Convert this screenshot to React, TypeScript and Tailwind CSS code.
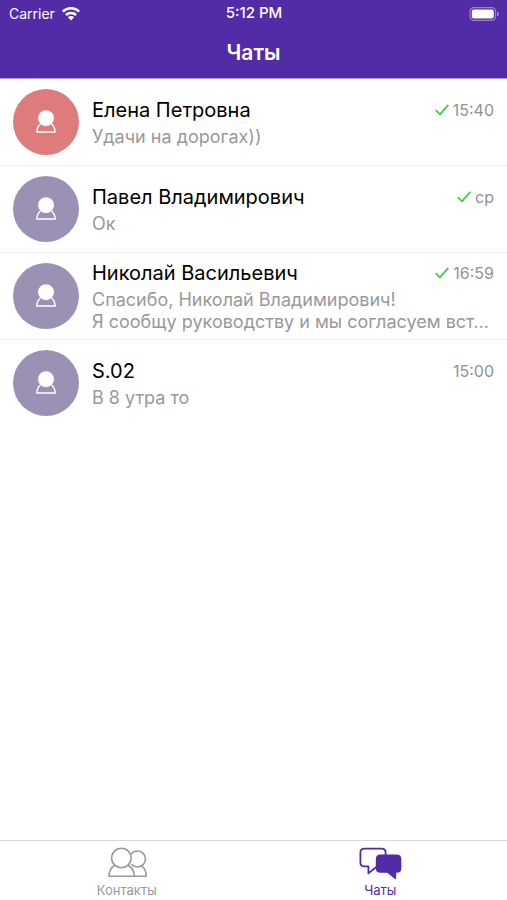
import React, { useState } from 'react';

type Chat = {
  id: number;
  name: string;
  message: string;
  time: string;
  read: boolean;
  color: string;
};

const chats: Chat[] = [
  {
    id: 1,
    name: 'Елена Петровна',
    message: 'Удачи на дорогах))',
    time: '15:40',
    read: true,
    color: 'bg-[#dd7b7d]',
  },
  {
    id: 2,
    name: 'Павел Владимирович',
    message: 'Ок',
    time: 'ср',
    read: true,
    color: 'bg-[#9b91b5]',
  },
  {
    id: 3,
    name: 'Николай Васильевич',
    message: 'Спасибо, Николай Владимирович!\nЯ сообщу руководству и мы согласуем вст...',
    time: '16:59',
    read: true,
    color: 'bg-[#9b91b5]',
  },
  {
    id: 4,
    name: 'S.02',
    message: 'В 8 утра то',
    time: '15:00',
    read: false,
    color: 'bg-[#9b91b5]',
  },
];

const WifiIcon = () => (
  <svg viewBox="0 0 18 14" className="w-[18px] h-[14px]" fill="none" stroke="white" strokeWidth="2.5">
    <path d="M0.9 4.6A11.6 11.6 0 0 1 17.1 4.6" />
    <path d="M3.9 8A7.3 7.3 0 0 1 14.1 8" />
    <path d="M9 13.4L5.9 10.3A4.4 4.4 0 0 1 12.1 10.3Z" fill="white" stroke="none" />
  </svg>
);

const BatteryIcon = () => (
  <svg viewBox="0 0 30 14" className="w-[30px] h-[14px]">
    <rect x="1" y="0.6" width="25.6" height="12.8" rx="4" fill="none" stroke="#9c83d3" strokeWidth="1.2" />
    <rect x="2.8" y="2.5" width="22" height="9" rx="2.2" fill="white" />
    <path d="M28 4.6Q30 5.4 30 7T28 9.4Z" fill="#9c83d3" />
  </svg>
);

const PersonIcon = () => (
  <svg viewBox="0 0 20 24" className="w-5 h-6">
    <path
      d="M4.4 14C2.2 15.8 1 18.4 0.8 22H19.2C19 18.4 17.8 15.8 15.6 14"
      fill="none"
      stroke="white"
      strokeWidth="1.5"
      strokeLinejoin="round"
    />
    <circle cx="10" cy="8.2" r="8" fill="white" />
  </svg>
);

const CheckIcon = () => (
  <svg viewBox="0 0 14 12" className="w-[14px] h-3" fill="none" stroke="#43cf43" strokeWidth="1.8">
    <path d="M1.2 6.6L5 10.4L12.8 1.4" strokeLinecap="round" strokeLinejoin="round" />
  </svg>
);

const ContactsIcon = () => (
  <svg viewBox="0 0 40 32" className="w-10 h-8" fill="none" stroke="currentColor" strokeWidth="1.6" strokeLinejoin="round">
    <circle cx="14.4" cy="11" r="9.8" />
    <path d="M7.8 18.2C4.2 20.4 2 24.2 1.8 29.2H27.4C27.2 24.2 25 20.4 21 18.2" />
    <path d="M24 7.2A8 8 0 1 1 24.4 17.2" />
    <path d="M35 19.4C37.8 21.4 39.2 24.8 39.2 29.2H27.4" />
  </svg>
);

const ChatsIcon = () => (
  <svg viewBox="0 0 44 34" className="w-11 h-[34px]" stroke="currentColor" strokeLinejoin="round">
    <path
      d="M18.6 19.8L10.4 26.4V19.4H6.4Q2.4 19.4 2.4 15.4V5.4Q2.4 1.6 6.4 1.6H23.6Q27.6 1.6 27.6 5.4V8"
      fill="none"
      strokeWidth="1.8"
    />
    <path
      d="M22.4 8.2H38.6Q42.6 8.2 42.6 12V21.4Q42.6 25 38.6 25H37.4V31.4L29.4 25H22.4Q18.6 25 18.6 21.4V12Q18.6 8.2 22.4 8.2Z"
      fill="currentColor"
      strokeWidth="1.5"
    />
  </svg>
);

const ChatRow = ({ chat }: { chat: Chat }) => (
  <li className="border-b border-[#f3f3f3] last:border-transparent">
    <button className="flex w-full h-[86px] items-center gap-[13px] px-[13px] text-left">
      <span className={`flex size-[66px] shrink-0 items-center justify-center rounded-full ${chat.color}`}>
        <PersonIcon />
      </span>
      <span className="min-w-0 flex-1">
        <span className="flex items-center justify-between">
          <span className="truncate text-[20px] leading-[26px] text-black">{chat.name}</span>
          <span className="flex shrink-0 items-center gap-1 text-[16px] leading-[26px] text-[#939393]">
            {chat.read && <CheckIcon />}
            {chat.time}
          </span>
        </span>
        <span className="mt-[3px] block">
          {chat.message.split('\n').map((line) => (
            <span key={line} className="block truncate text-[18px] leading-[22px] text-[#999999]">
              {line}
            </span>
          ))}
        </span>
      </span>
    </button>
  </li>
);

const App = () => {
  const [tab, setTab] = useState('chats');

  return (
    <div className="flex min-h-screen flex-col bg-white font-['Inter','Liberation_Sans',sans-serif]">
      {/* Header */}
      <header className="border-b border-[#b79be8] bg-[#522ba7] text-white">
        <div className="grid h-[27px] grid-cols-3 items-center pl-[9px] pr-2 text-[14px]">
          <div className="flex items-center gap-[7px]">
            <span>Carrier</span>
            <WifiIcon />
          </div>
          <span className="text-center text-[15px] font-medium">5:12 PM</span>
          <div className="flex justify-end">
            <BatteryIcon />
          </div>
        </div>
        <h1 className="h-[51px] text-center text-[21px] leading-[51px] font-semibold">Чаты</h1>
      </header>

      {/* Chat list */}
      <main className="flex-1">
        <ul>
          {chats.map((chat) => (
            <ChatRow key={chat.id} chat={chat} />
          ))}
        </ul>
      </main>

      {/* Tab bar */}
      <nav className="grid h-[60px] grid-cols-2 border-t border-[#d8d8d8] text-[13px] leading-4">
        <button
          className={`flex flex-col items-center pt-[6px] ${tab === 'contacts' ? 'text-[#522ba7]' : 'text-[#999999]'}`}
          onClick={() => setTab('contacts')}
        >
          <span className="flex h-[35px] items-start">
            <ContactsIcon />
          </span>
          Контакты
        </button>
        <button
          className={`flex flex-col items-center pt-[6px] ${tab === 'chats' ? 'text-[#522ba7]' : 'text-[#999999]'}`}
          onClick={() => setTab('chats')}
        >
          <span className="flex h-[35px] items-start">
            <ChatsIcon />
          </span>
          Чаты
        </button>
      </nav>
    </div>
  );
};

export default App;
